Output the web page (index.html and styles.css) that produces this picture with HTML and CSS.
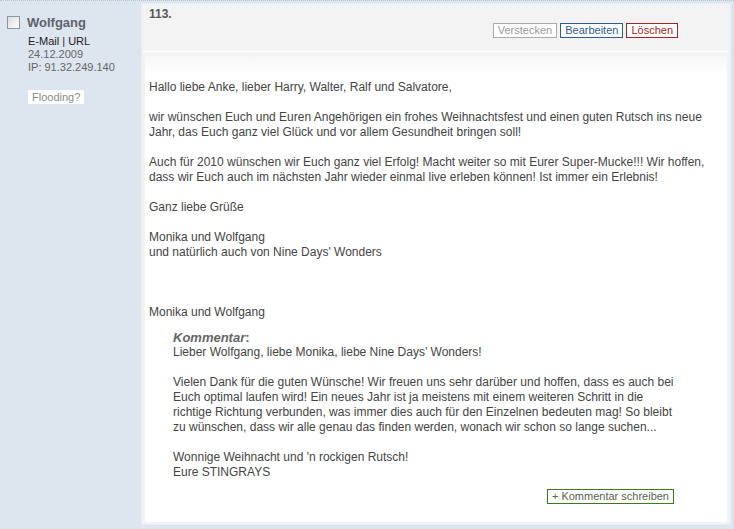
FILE: index.html
```html
<!DOCTYPE html>
<html lang="de">
  <head>
    <meta charset="UTF-8" />
    <title>Gästebuch</title>
    <link rel="stylesheet" href="styles.css">
  </head>
  <body>
    <div class="entry">
      <!-- Author column -->
      <div class="author">
        <div class="author-name">
          <span class="check"></span>
          <span>Wolfgang</span>
        </div>
        <div class="author-info">
          <div class="links"><a href="#">E-Mail</a> | <a href="#">URL</a></div>
          <div>24.12.2009</div>
          <div>IP: 91.32.249.140</div>
        </div>
        <button class="flood">Flooding?</button>
      </div>

      <!-- Post -->
      <div class="post">
        <div class="post-head">
          <div class="post-num">113.</div>
          <div class="actions">
            <button class="btn btn-hide">Verstecken</button>
            <button class="btn btn-edit">Bearbeiten</button>
            <button class="btn btn-del">Löschen</button>
          </div>
        </div>
        <div class="post-body">
          <p>Hallo liebe Anke, lieber Harry, Walter, Ralf und Salvatore,</p>
          <p>wir wünschen Euch und Euren Angehörigen ein frohes Weihnachtsfest und einen guten Rutsch ins neue<br>Jahr, das Euch ganz viel Glück und vor allem Gesundheit bringen soll!</p>
          <p>Auch für 2010 wünschen wir Euch ganz viel Erfolg! Macht weiter so mit Eurer Super-Mucke!!! Wir hoffen,<br>dass wir Euch auch im nächsten Jahr wieder einmal live erleben können! Ist immer ein Erlebnis!</p>
          <p>Ganz liebe Grüße</p>
          <p>Monika und Wolfgang<br>und natürlich auch von Nine Days' Wonders</p>
          <p class="signature">Monika und Wolfgang</p>
          <div class="comment">
            <div class="comment-label"><em>Kommentar</em>:</div>
            <p>Lieber Wolfgang, liebe Monika, liebe Nine Days' Wonders!</p>
            <p>Vielen Dank für die guten Wünsche! Wir freuen uns sehr darüber und hoffen, dass es auch bei<br>Euch optimal laufen wird! Ein neues Jahr ist ja meistens mit einem weiteren Schritt in die<br>richtige Richtung verbunden, was immer dies auch für den Einzelnen bedeuten mag! So bleibt<br>zu wünschen, dass wir alle genau das finden werden, wonach wir schon so lange suchen...</p>
            <p>Wonnige Weihnacht und 'n rockigen Rutsch!<br>Eure STINGRAYS</p>
          </div>
          <div class="comment-add">
            <button class="btn btn-comment">+ Kommentar schreiben</button>
          </div>
        </div>
      </div>
    </div>
  </body>
</html>
```

FILE: styles.css
```css
body {
  margin: 0;
  background-color: #dde5ef;
  font-family: "Liberation Sans", Arial, sans-serif;
  font-size: 12px;
  color: #444444;
}
.entry {
  display: flex;
  height: 529px;
  border-top: 1px dotted #b9c4d2;
  box-sizing: border-box;
}
.author {
  width: 141px;
  flex-shrink: 0;
  padding: 14px 0 0 7px;
  box-sizing: border-box;
}
.author-name {
  display: flex;
  align-items: center;
  gap: 7px;
  font-weight: bold;
  font-size: 13px;
  color: #5d636e;
}
.check {
  width: 11px;
  height: 11px;
  border: 1px solid #8e949c;
  background: linear-gradient(135deg, #dcdcdc, #ffffff);
}
.author-info {
  margin: 5px 0 0 21px;
  font-size: 11px;
  line-height: 13px;
  color: #666666;
}
.links {
  color: #333333;
}
.links a {
  color: #222222;
  text-decoration: none;
}
.flood {
  margin: 16px 0 0 21px;
  padding: 1px 4px;
  border: none;
  background-color: #ffffff;
  font-family: inherit;
  font-size: 11px;
  color: #8a8a8a;
}
.post {
  flex: 1;
  margin: 2px 3px 4px 0;
  background-color: #f3f3f3;
  border: 1px solid #e9edf2;
  display: flex;
  flex-direction: column;
}
.post-head {
  height: 48px;
  padding: 3px 52px 0 7px;
  box-sizing: border-box;
  border-bottom: 1px solid #ffffff;
}
.post-num {
  font-weight: bold;
  color: #555555;
}
.actions {
  display: flex;
  justify-content: flex-end;
  gap: 3px;
  margin-top: 2px;
}
.btn {
  background-color: #ffffff;
  font-family: inherit;
  font-size: 11px;
  line-height: 13px;
  padding: 0 4px;
  cursor: pointer;
}
.btn-hide {
  border: 1px solid #aaaaaa;
  color: #9a9a9a;
}
.btn-edit {
  border: 1px solid #2e5e8c;
  color: #2e5e8c;
}
.btn-del {
  border: 1px solid #a52525;
  color: #a52525;
}
.btn-comment {
  border: 1px solid #3d7a1c;
  color: #56654c;
}
.post-body {
  flex: 1;
  margin: 4px 3px 2px 3px;
  padding: 24px 0 0 4px;
  background: linear-gradient(#f7f7f7, #ffffff 20px);
  line-height: 15px;
}
.post-body p {
  margin: 0 0 15px 0;
}
.signature {
  margin-top: 45px !important;
  margin-bottom: 10px !important;
}
.comment {
  padding-left: 24px;
}
.comment-label {
  color: #666666;
  font-weight: bold;
  font-size: 13px;
}
.comment p {
  margin-bottom: 15px;
}
.comment-add {
  display: flex;
  justify-content: flex-end;
  padding-right: 53px;
  margin-top: -6px;
}
```
